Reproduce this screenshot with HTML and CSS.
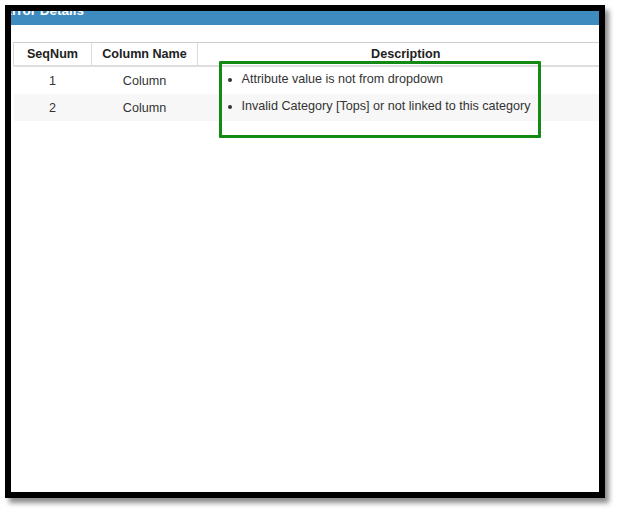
FILE: index.html
```html
<!DOCTYPE html>
<html>
<head>
<meta charset="utf-8">
<link rel="stylesheet" href="styles.css">
</head>
<body>
<div class="frame">
  <div class="titlebar"><span class="title">Error Details</span></div>
  <div class="table-wrap">
    <table class="grid">
      <colgroup>
        <col class="c-seq">
        <col class="c-name">
        <col class="c-desc">
      </colgroup>
      <thead>
        <tr><th>SeqNum</th><th>Column Name</th><th>Description</th></tr>
      </thead>
      <tbody>
        <tr>
          <td>1</td><td>Column</td>
          <td class="desc"><ul><li>Attribute value is not from dropdown</li></ul></td>
        </tr>
        <tr class="alt">
          <td>2</td><td>Column</td>
          <td class="desc"><ul><li>Invalid Category [Tops] or not linked to this category</li></ul></td>
        </tr>
      </tbody>
    </table>
  </div>
  <div class="highlight"></div>
</div>
</body>
</html>
```
FILE: styles.css
```css
html, body {
  margin: 0;
  padding: 0;
  background: #ffffff;
}
body {
  width: 618px;
  height: 511px;
  overflow: hidden;
  font-family: "Liberation Sans", Arial, sans-serif;
}
.frame {
  position: relative;
  margin: 5px 0 0 5px;
  width: 588px;
  height: 481px;
  border: 6px solid #000;
  background: #fff;
  overflow: hidden;
  box-shadow: 4px 5px 5px rgba(0, 0, 0, 0.45);
  display: flex;
  flex-direction: column;
}
.titlebar {
  height: 14px;
  background: #3e8bc0;
  overflow: hidden;
  flex: none;
}
.title {
  display: block;
  margin: -7px 0 0 -8px;
  font-size: 13.5px;
  line-height: 14px;
  font-weight: bold;
  color: #ffffff;
  white-space: nowrap;
}
.table-wrap {
  margin-top: 17px;
  padding-left: 2px;
}
.grid {
  width: 600px;
  table-layout: fixed;
  border-collapse: collapse;
  font-size: 12.6px;
  color: #333;
}
.c-seq { width: 78px; }
.c-name { width: 106px; }
.c-desc { width: 416px; }
.grid th {
  height: 22px;
  padding: 0;
  font-weight: bold;
  text-align: center;
  border-top: 1px solid #cfcfcf;
  border-left: 1px solid #dcdcdc;
  border-bottom: 2px solid #dedede;
  color: #222;
}
.grid td {
  height: 27px;
  padding: 0;
  text-align: center;
  vertical-align: middle;
}
.grid tr.alt td {
  background: #f7f7f7;
}
.grid td.desc {
  text-align: left;
}
.grid ul {
  margin: 0;
  padding: 0 0 4px 44px;
}
.highlight {
  position: absolute;
  left: 208px;
  top: 50px;
  width: 316px;
  height: 71px;
  border: 3px solid #138a13;
  border-radius: 1px;
}
```
